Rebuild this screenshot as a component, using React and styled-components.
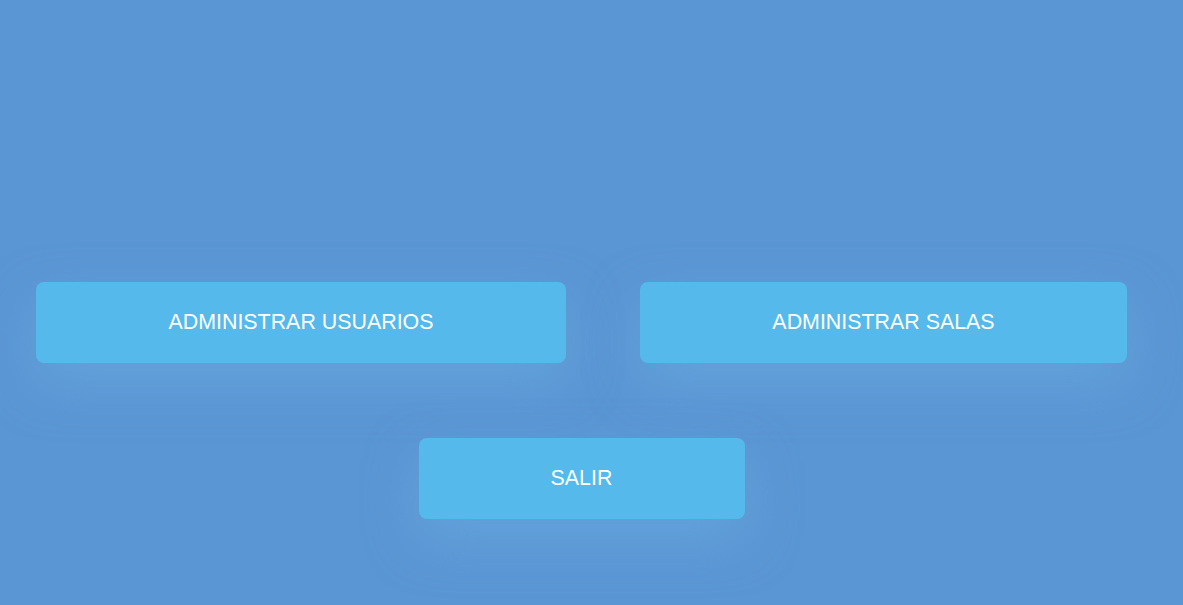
import React from "react";
import styled, { createGlobalStyle } from "styled-components";

const Global = createGlobalStyle`
  html, body { margin: 0; padding: 0; }
  body {
    background: #5b96d4;
    font-family: "Liberation Sans", Arial, sans-serif;
    min-height: 605px;
  }
`;

const Page = styled.div`
  box-sizing: border-box;
  height: 605px;
  padding: 282px 56px 0 36px;
  display: flex;
  flex-direction: column;
  gap: 75px;
`;

const Row = styled.div`
  display: flex;
  justify-content: ${(p) => p.$justify || "space-between"};
`;

const MenuButton = styled.button`
  width: ${(p) => p.$w}px;
  height: 81px;
  padding: 0;
  border: none;
  border-radius: 8px;
  background: #55b9ec;
  color: #ffffff;
  font-family: "Liberation Sans", Arial, sans-serif;
  font-size: 21.4px;
  letter-spacing: 0;
  cursor: pointer;
  box-shadow: 0 20px 50px rgba(105, 175, 225, 0.5);
`;

export default function App() {
  return (
    <>
      <Global />
      <Page>
        <Row>
          <MenuButton $w={530}>ADMINISTRAR USUARIOS</MenuButton>
          <MenuButton $w={487}>ADMINISTRAR SALAS</MenuButton>
        </Row>
        <Row $justify="center">
          <MenuButton $w={326}>SALIR</MenuButton>
        </Row>
      </Page>
    </>
  );
}
